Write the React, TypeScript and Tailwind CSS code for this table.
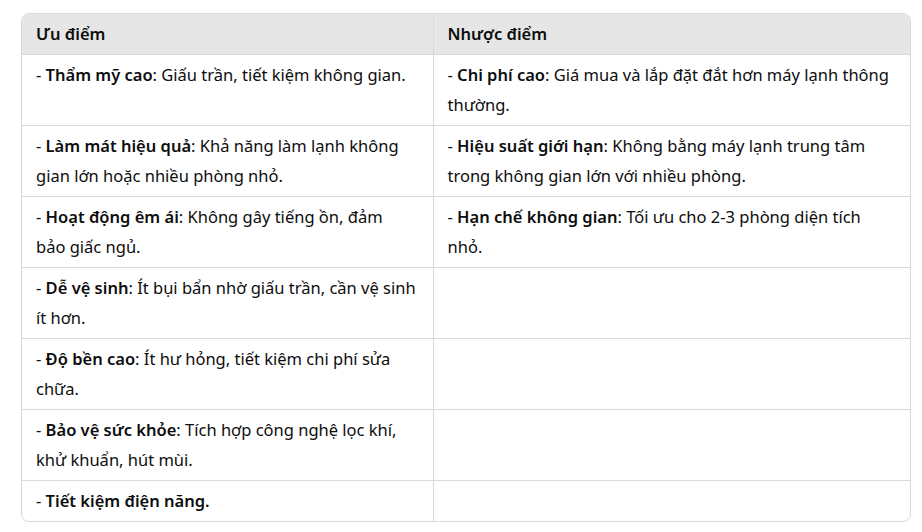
import React from 'react';

type Cell = { title: string; desc?: string } | null;

const rows: [Cell, Cell][] = [
  [
    { title: 'Thẩm mỹ cao', desc: 'Giấu trần, tiết kiệm không gian.' },
    { title: 'Chi phí cao', desc: 'Giá mua và lắp đặt đắt hơn máy lạnh thông thường.' },
  ],
  [
    { title: 'Làm mát hiệu quả', desc: 'Khả năng làm lạnh không gian lớn hoặc nhiều phòng nhỏ.' },
    { title: 'Hiệu suất giới hạn', desc: 'Không bằng máy lạnh trung tâm trong không gian lớn với nhiều phòng.' },
  ],
  [
    { title: 'Hoạt động êm ái', desc: 'Không gây tiếng ồn, đảm bảo\u00a0giấc ngủ.' },
    { title: 'Hạn chế không gian', desc: 'Tối ưu cho 2-3 phòng diện tích nhỏ.' },
  ],
  [{ title: 'Dễ vệ sinh', desc: 'Ít bụi bẩn nhờ giấu trần, cần vệ sinh ít hơn.' }, null],
  [{ title: 'Độ bền cao', desc: 'Ít hư hỏng, tiết kiệm chi phí sửa chữa.' }, null],
  [{ title: 'Bảo vệ sức khỏe', desc: 'Tích hợp công nghệ lọc khí, khử khuẩn, hút mùi.' }, null],
  [{ title: 'Tiết kiệm điện năng.' }, null],
];

function Content({ cell }: { cell: Cell }) {
  if (!cell) return null;
  return (
    <>
      - <strong className="font-semibold">{cell.title}</strong>
      {cell.desc ? <>: {cell.desc}</> : null}
    </>
  );
}

export default function App() {
  return (
    <div className="bg-white min-h-[532px] pt-[13px] pl-[21px] pr-[11px] font-['Noto_Sans',sans-serif] text-[16.5px] leading-[30px] text-[#0d0d0d]">
      <div className="w-[890px] border border-[#d9d9d9] rounded-lg overflow-hidden">
        <table className="w-full border-collapse table-fixed">
          <thead>
            <tr className="bg-[#e6e6e6]">
              <th className="w-[411px] text-left font-semibold px-[14px] py-[5px] border-r border-[#d9d9d9]">Ưu điểm</th>
              <th className="text-left font-semibold px-[14px] py-[5px]">Nhược điểm</th>
            </tr>
          </thead>
          <tbody>
            {rows.map((r, i) => (
              <tr key={i} className="border-t border-[#d9d9d9]">
                <td className="align-top px-[14px] py-[5px] border-r border-[#d9d9d9]">
                  <Content cell={r[0]} />
                </td>
                <td className="align-top px-[14px] py-[5px]">
                  <Content cell={r[1]} />
                </td>
              </tr>
            ))}
          </tbody>
        </table>
      </div>
    </div>
  );
}
